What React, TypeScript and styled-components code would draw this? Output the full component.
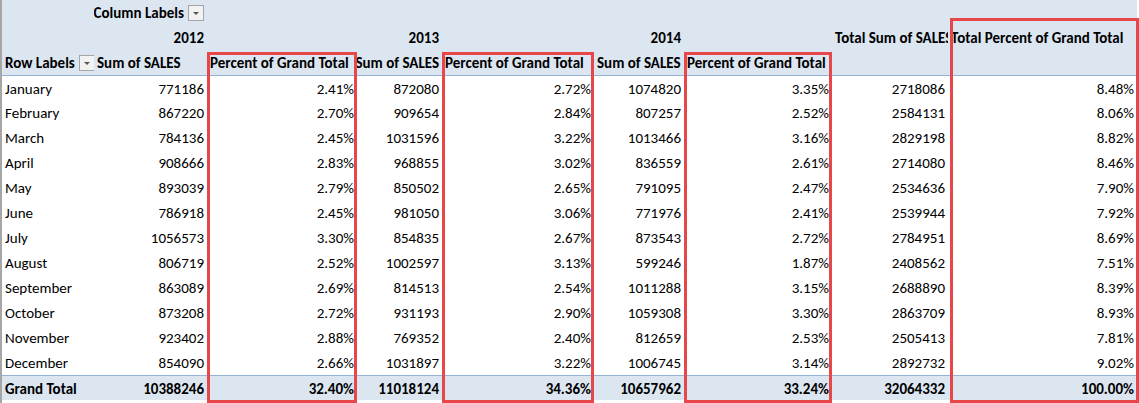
import * as React from "react";
import styled, { createGlobalStyle } from "styled-components";

const Global = createGlobalStyle`
  body { margin: 0; background: #fff; font-family: Calibri, "Liberation Sans", Arial, sans-serif; }
`;

const COLS = [92, 113, 150, 85, 152, 90, 148, 116, 189];
const starts = COLS.reduce<number[]>((acc, w, i) => [...acc, i === 0 ? 0 : acc[i - 1] + COLS[i - 1]], []);

const rows: [string, number, string, number, string, number, string, number, string][] = [
  ["January", 771186, "2.41%", 872080, "2.72%", 1074820, "3.35%", 2718086, "8.48%"],
  ["February", 867220, "2.70%", 909654, "2.84%", 807257, "2.52%", 2584131, "8.06%"],
  ["March", 784136, "2.45%", 1031596, "3.22%", 1013466, "3.16%", 2829198, "8.82%"],
  ["April", 908666, "2.83%", 968855, "3.02%", 836559, "2.61%", 2714080, "8.46%"],
  ["May", 893039, "2.79%", 850502, "2.65%", 791095, "2.47%", 2534636, "7.90%"],
  ["June", 786918, "2.45%", 981050, "3.06%", 771976, "2.41%", 2539944, "7.92%"],
  ["July", 1056573, "3.30%", 854835, "2.67%", 873543, "2.72%", 2784951, "8.69%"],
  ["August", 806719, "2.52%", 1002597, "3.13%", 599246, "1.87%", 2408562, "7.51%"],
  ["September", 863089, "2.69%", 814513, "2.54%", 1011288, "3.15%", 2688890, "8.39%"],
  ["October", 873208, "2.72%", 931193, "2.90%", 1059308, "3.30%", 2863709, "8.93%"],
  ["November", 923402, "2.88%", 769352, "2.40%", 812659, "2.53%", 2505413, "7.81%"],
  ["December", 854090, "2.66%", 1031897, "3.22%", 1006745, "3.14%", 2892732, "9.02%"],
];

const Sheet = styled.div`
  position: relative;
  width: 1139px;
  height: 403px;
  border-left: 2px solid #a6a6a6;
  box-sizing: border-box;
  overflow: hidden;
`;

const Grid = styled.div`
  display: grid;
  grid-template-columns: ${COLS.map((c) => c + "px").join(" ")};
  grid-auto-rows: 25px;
  font-size: 15px;
  color: #000;
`;

const Cell = styled.div<{ $right?: boolean; $bold?: boolean; $band?: boolean; $top?: boolean }>`
  display: flex;
  align-items: center;
  justify-content: ${(p) => (p.$right ? "flex-end" : "flex-start")};
  padding: 1px 3px 0;
  font-weight: ${(p) => (p.$bold ? 700 : 400)};
  background: ${(p) => (p.$band ? "#dce6f1" : "#fff")};
  border-top: ${(p) => (p.$top ? "1px solid #95b3d7" : "none")};
  white-space: nowrap;
  overflow: hidden;
`;

const Drop = styled.span`
  display: inline-flex;
  flex: none;
  align-items: center;
  justify-content: center;
  width: 14px;
  height: 14px;
  margin-left: 4px;
  border: 1px solid #a6a6a6;
  background: #f2f2f2;
  &::after {
    content: "";
    border-left: 3px solid transparent;
    border-right: 3px solid transparent;
    border-top: 3px solid #555;
  }
`;

const Box = styled.div`
  position: absolute;
  border: 3px solid #e8474a;
  box-sizing: border-box;
  pointer-events: none;
`;

export default function App() {
  const H = (children: React.ReactNode, right = false) => (
    <Cell $band $bold $right={right}>{children}</Cell>
  );
  return (
    <>
      <Global />
      <Sheet>
        <Grid>
          {H("")}
          {H(<>Column Labels<Drop /></>, true)}
          {H("")}{H("")}{H("")}{H("")}{H("")}{H("")}{H("")}

          {H("")}
          {H("2012", true)}
          {H("")}
          {H("2013", true)}
          {H("")}
          {H("2014", true)}
          {H("")}
          {H("Total Sum of SALES")}
          {H("Total Percent of Grand Total")}

          {H(<>Row Labels<Drop /></>)}
          {H("Sum of SALES")}
          {H("Percent of Grand Total")}
          {H("Sum of SALES", true)}
          {H("Percent of Grand Total")}
          {H("Sum of SALES")}
          {H("Percent of Grand Total")}
          {H("")}
          {H("")}

          {rows.map((r, ri) =>
            r.map((v, ci) => (
              <Cell key={ri + "-" + ci} $right={ci > 0} $top={ri === 0}>
                {v}
              </Cell>
            ))
          )}

          <Cell $band $bold $top>Grand Total</Cell>
          <Cell $band $bold $top $right>10388246</Cell>
          <Cell $band $bold $top $right>32.40%</Cell>
          <Cell $band $bold $top $right>11018124</Cell>
          <Cell $band $bold $top $right>34.36%</Cell>
          <Cell $band $bold $top $right>10657962</Cell>
          <Cell $band $bold $top $right>33.24%</Cell>
          <Cell $band $bold $top $right>32064332</Cell>
          <Cell $band $bold $top $right>100.00%</Cell>
        </Grid>
        {[2, 4, 6].map((c) => (
          <Box key={c} style={{ left: starts[c], top: 52, width: COLS[c], height: 351 }} />
        ))}
        <Box style={{ left: starts[8] + 2, top: 18, width: COLS[8], height: 385 }} />
      </Sheet>
    </>
  );
}
